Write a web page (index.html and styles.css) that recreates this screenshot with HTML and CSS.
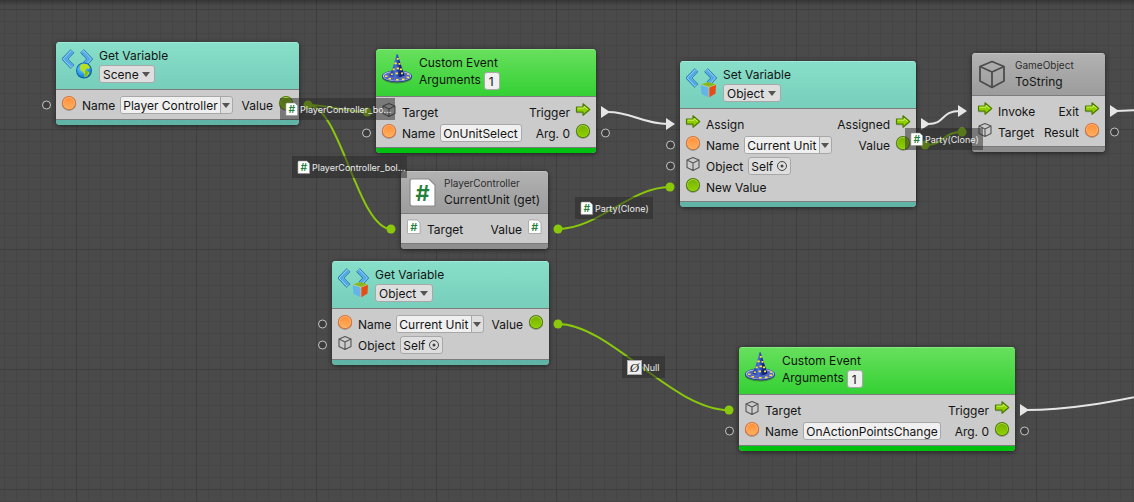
FILE: index.html
```html
<!DOCTYPE html>
<html lang="en">
<head>
<meta charset="utf-8">
<title>Script Graph</title>
<link rel="stylesheet" href="styles.css">
</head>
<body>
<svg class="defs" aria-hidden="true">
  <defs>
    <linearGradient id="gOrange" x1="0" y1="0" x2="0" y2="1"><stop offset="0" stop-color="#ff8f3c"/><stop offset="1" stop-color="#ffb05c"/></linearGradient>
    <linearGradient id="gGreen" x1="0" y1="0" x2="0" y2="1"><stop offset="0" stop-color="#78b400"/><stop offset="1" stop-color="#8fd000"/></linearGradient>
    <linearGradient id="gHat" x1="0" y1="0" x2="1" y2="0"><stop offset="0" stop-color="#142a86"/><stop offset=".4" stop-color="#4a70d8"/><stop offset=".7" stop-color="#12257c"/><stop offset="1" stop-color="#0c1c60"/></linearGradient>
    <radialGradient id="gGlobe" cx=".4" cy=".35" r=".7"><stop offset="0" stop-color="#7fd8ff"/><stop offset=".6" stop-color="#2c9be8"/><stop offset="1" stop-color="#0f6cc0"/></radialGradient>
    <symbol id="orange" viewBox="0 0 16 16"><circle cx="8" cy="8.7" r="7.2" fill="#777" opacity=".6"/><circle cx="8" cy="8" r="7" fill="#e0702c"/><circle cx="8" cy="8" r="6" fill="#ffc08c"/><circle cx="8" cy="8.3" r="5.5" fill="url(#gOrange)"/></symbol>
    <symbol id="green" viewBox="0 0 16 16"><circle cx="8" cy="8.7" r="7.2" fill="#777" opacity=".6"/><circle cx="8" cy="8" r="7" fill="#4b7d00"/><circle cx="8" cy="8" r="6" fill="#b4dc50"/><circle cx="8" cy="8.3" r="5.5" fill="url(#gGreen)"/></symbol>
    <symbol id="flow" viewBox="0 0 16 16"><path d="M1.500 6.200H8V3L14.500 8.500L8 14V11.200H1.500Z" fill="#555" opacity=".4"/><path d="M1.500 5H8V1.800L14.700 7.500L8 13.200V10H1.500Z" fill="#8fce00" stroke="#4b7d00" stroke-width="1.200" stroke-linejoin="round"/><path d="M2.600 6.200H9.100V4.400L12.800 7.500" fill="none" stroke="#cdf060" stroke-width="1"/></symbol>
    <symbol id="box" viewBox="0 0 16 16"><path d="M8 1.500L14 4V11.500L8 14.500L2 11.500V4ZM2 4L8 7L14 4M8 7V14.500" fill="none" stroke="#555" stroke-width="1.100" stroke-linejoin="round"/></symbol>
    <symbol id="boxLarge" viewBox="0 0 32 32"><path d="M14 3.500L26 8.500V23L14 29.500L2 23V8.500ZM2 8.500L14 14L26 8.500M14 14V29.500" fill="none" stroke="#4c4c4c" stroke-width="1.800" stroke-linejoin="round"/></symbol>
    <symbol id="script" viewBox="0 0 14 16"><path d="M1.500 1H10L13 4V14.500H1.500Q.5 14.500 .5 13.500V2Q.5 1 1.500 1Z" fill="#fff" stroke="#8a8a8a" stroke-width=".6"/><text x="6.800" y="11.800" text-anchor="middle" class="hash">#</text></symbol>
    <symbol id="angles" viewBox="0 0 32 32">
      <path d="M10.500 2L2.800 10L10.500 18M20 2L27.700 10L22.500 15.500" fill="none" stroke="#1f6cae" stroke-width="5"/>
      <path d="M10.200 2.300L2.800 10L10.200 17.700M20.300 2.300L27.700 10L22.500 15.500" fill="none" stroke="#9bd8fa" stroke-width="3.400"/>
      <path d="M10.200 2.800L3.200 10L10.200 17.200M20.300 2.800L27.300 10L22.500 15" fill="none" stroke="#4ea9e6" stroke-width="2.400"/>
    </symbol>
    <symbol id="varScene" viewBox="0 0 32 32"><use href="#angles"/>
      <circle cx="22" cy="21.500" r="8" fill="#0d5ca8"/><circle cx="22" cy="21.500" r="7.200" fill="url(#gGlobe)"/>
      <path d="M20 14.800L25 15L28 18L27 20L24.500 19.500L23 21.500L26 22.500L27.500 24L25 27.500L22.500 28.200L22.500 25L20.500 22.500L18.500 21L18 17Z" fill="#b8e020"/><path d="M23 21.500L26.500 22.500L25 27L23 28V24Z" fill="#7cc01c"/>
    </symbol>
    <symbol id="varObject" viewBox="0 0 32 32"><use href="#angles"/>
      <path d="M14.500 16.500L22.500 14L30 16.500L23 19.500Z" fill="#8ab81c"/><path d="M14.500 16.500L23 19.200V29.500L15.500 26Z" fill="#64b4e8"/><path d="M30 16.500L23 19.200V29.500L29.500 25.500Z" fill="#e64c14"/><path d="M14.500 16.500L23 19.200L30 16.500M23 19.200V29.500" fill="none" stroke="#d8e8b0" stroke-width=".5"/>
    </symbol>
    <symbol id="hat" viewBox="0 0 32 32">
      <ellipse cx="15" cy="23.500" rx="15" ry="6" fill="#333" opacity=".45"/><ellipse cx="15" cy="22.300" rx="15" ry="6" fill="#26388f"/><ellipse cx="15" cy="22" rx="14.200" ry="5.300" fill="#b4c0ee"/><ellipse cx="15" cy="22.300" rx="13" ry="4.500" fill="#5468c0"/>
      <path d="M15 0Q16 0 16.500 3L20 14L22.500 21.500Q15 25.500 7.500 21.500L11 13L13.800 3Q14.200 0 15 0Z" fill="url(#gHat)"/>
      <path d="M14.800 4h2v1.700h-2zM12.300 8.500h2.500v1.700h-2.500zM16.500 9h2v1.700h-2zM14.500 13.500h2.500v1.700h-2.500zM10.500 14.500h2.200v1.700h-2.200zM17.800 14.500h2.200v1.700h-2.200zM13.500 18.500h2.500v1.700h-2.500zM19 18.500h2v1.700h-2zM8.800 19.500h2v1.500h-2zM3 21.500h2.500v1.500h-2.500zM6.500 24h2.500v1.500h-2.500zM14 25h2.500v1.500h-2.500zM20 24.500h2.500v1.500h-2.500zM24.500 22.500h2.500v1.500h-2.500zM25 19.500h2v1.300h-2z" fill="#ffe43c"/>
    </symbol>
    <symbol id="target" viewBox="0 0 12 12"><circle cx="6" cy="6" r="4.500" fill="none" stroke="#444" stroke-width="1"/><circle cx="6" cy="6" r="1.500" fill="#444"/></symbol>
  </defs>
</svg>

<main class="graph">
  <svg class="wires" aria-hidden="true">
    <g class="wire value">
      <path d="M308 105C330 105 345 112 367 112"/>
      <path d="M308 105C340 105 358 229 391 229"/>
      <path d="M558 229C598 229 630 187 670 187"/>
      <path d="M558 324C610 324 672 410 729 410"/>
      <path d="M925 145C945 145 942 132 962 132"/>
    </g>
    <g class="wire control">
      <path d="M608 112C632 112 642 124 668 124"/>
      <path d="M928 124C946 124 940 111 960 111"/>
      <path d="M1116 111L1160 109"/>
      <path d="M1026 410C1070 410 1110 402 1150 394"/>
    </g>
    <g class="dot">
      <circle cx="308" cy="105" r="4.500"/><circle cx="367" cy="112" r="4.500"/><circle cx="391" cy="229" r="4.500"/><circle cx="558" cy="229" r="4.500"/><circle cx="670" cy="187" r="4.500"/><circle cx="558" cy="324" r="4.500"/><circle cx="729" cy="410" r="4.500"/><circle cx="925" cy="145" r="4.500"/><circle cx="962" cy="132" r="4.500"/>
    </g>
    <g class="ring">
      <circle cx="46.500" cy="105" r="4"/><circle cx="366.500" cy="133" r="4"/><circle cx="605.500" cy="133" r="4"/><circle cx="670.500" cy="145" r="4"/><circle cx="670.500" cy="166" r="4"/><circle cx="1114.500" cy="132" r="4"/><circle cx="322.500" cy="324" r="4"/><circle cx="322.500" cy="345" r="4"/><circle cx="729.500" cy="431" r="4"/><circle cx="1024.500" cy="431" r="4"/>
    </g>
    <path class="tip" d="M601 106L610 112L601 118ZM666 118L675 124L666 130ZM921 118L930 124L921 130ZM958 105L967 111L958 117ZM1110 105L1119 111L1110 117ZM1020 404L1029 410L1020 416Z"/>
  </svg>

  <section class="node teal get-scene">
    <header class="head"><svg class="unit-icon low"><use href="#varScene"/></svg>
      <div class="titles"><h2 class="title">Get Variable</h2>
        <span class="drop"><select aria-label="Variable kind"><option>Scene</option></select></span></div></header>
    <div class="body">
      <div class="row"><div class="port"><svg class="icon"><use href="#orange"/></svg><label for="n1">Name</label><span class="combo"><input id="n1" class="w-long" value="Player Controller"><button aria-label="Choose variable"></button></span></div><div class="port"><span>Value</span><svg class="icon"><use href="#green"/></svg></div></div>
    </div><div class="foot"></div>
  </section>

  <section class="node lime event-select">
    <header class="head"><svg class="unit-icon"><use href="#hat"/></svg>
      <div class="titles"><h2 class="title">Custom Event</h2>
        <div class="args"><label for="a1">Arguments</label><input id="a1" class="field count" value="1"></div></div></header>
    <div class="body">
      <div class="row"><div class="port"><svg class="icon"><use href="#box"/></svg><span>Target</span></div><div class="port"><span>Trigger</span><svg class="icon"><use href="#flow"/></svg></div></div>
      <div class="row"><div class="port"><svg class="icon"><use href="#orange"/></svg><label for="n2">Name</label><input id="n2" class="field w-medium" value="OnUnitSelect"></div><div class="port"><span>Arg. 0</span><svg class="icon"><use href="#green"/></svg></div></div>
    </div><div class="foot"></div>
  </section>

  <section class="node gray current-unit">
    <header class="head"><svg class="unit-icon page"><use href="#script"/></svg>
      <div class="titles"><p class="owner">PlayerController</p><h2 class="title">CurrentUnit (get)</h2></div></header>
    <div class="body">
      <div class="row"><div class="port"><svg class="icon"><use href="#script"/></svg><span>Target</span></div><div class="port"><span>Value</span><svg class="icon"><use href="#script"/></svg></div></div>
    </div><div class="foot"></div>
  </section>

  <section class="node teal set-object">
    <header class="head"><svg class="unit-icon low"><use href="#varObject"/></svg>
      <div class="titles"><h2 class="title">Set Variable</h2>
        <span class="drop"><select aria-label="Variable kind"><option>Object</option></select></span></div></header>
    <div class="body">
      <div class="row"><div class="port"><svg class="icon"><use href="#flow"/></svg><span>Assign</span></div><div class="port"><span>Assigned</span><svg class="icon"><use href="#flow"/></svg></div></div>
      <div class="row"><div class="port"><svg class="icon"><use href="#orange"/></svg><label for="n3">Name</label><span class="combo"><input id="n3" class="w-short" value="Current Unit"><button aria-label="Choose variable"></button></span></div><div class="port"><span>Value</span><svg class="icon"><use href="#green"/></svg></div></div>
      <div class="row"><div class="port"><svg class="icon"><use href="#box"/></svg><span>Object</span><button class="object">Self<svg><use href="#target"/></svg></button></div></div>
      <div class="row"><div class="port"><svg class="icon"><use href="#green"/></svg><span>New Value</span></div></div>
    </div><div class="foot"></div>
  </section>

  <section class="node gray to-string">
    <header class="head"><svg class="unit-icon"><use href="#boxLarge"/></svg>
      <div class="titles"><p class="owner">GameObject</p><h2 class="title">ToString</h2></div></header>
    <div class="body">
      <div class="row"><div class="port"><svg class="icon"><use href="#flow"/></svg><span>Invoke</span></div><div class="port"><span>Exit</span><svg class="icon"><use href="#flow"/></svg></div></div>
      <div class="row"><div class="port"><svg class="icon"><use href="#box"/></svg><span>Target</span></div><div class="port"><span>Result</span><svg class="icon"><use href="#orange"/></svg></div></div>
    </div><div class="foot"></div>
  </section>

  <section class="node teal get-object">
    <header class="head"><svg class="unit-icon low"><use href="#varObject"/></svg>
      <div class="titles"><h2 class="title">Get Variable</h2>
        <span class="drop"><select aria-label="Variable kind"><option>Object</option></select></span></div></header>
    <div class="body">
      <div class="row"><div class="port"><svg class="icon"><use href="#orange"/></svg><label for="n4">Name</label><span class="combo"><input id="n4" class="w-short" value="Current Unit"><button aria-label="Choose variable"></button></span></div><div class="port"><span>Value</span><svg class="icon"><use href="#green"/></svg></div></div>
      <div class="row"><div class="port"><svg class="icon"><use href="#box"/></svg><span>Object</span><button class="object">Self<svg><use href="#target"/></svg></button></div></div>
    </div><div class="foot"></div>
  </section>

  <section class="node lime event-points">
    <header class="head"><svg class="unit-icon"><use href="#hat"/></svg>
      <div class="titles"><h2 class="title">Custom Event</h2>
        <div class="args"><label for="a2">Arguments</label><input id="a2" class="field count" value="1"></div></div></header>
    <div class="body">
      <div class="row"><div class="port"><svg class="icon"><use href="#box"/></svg><span>Target</span></div><div class="port"><span>Trigger</span><svg class="icon"><use href="#flow"/></svg></div></div>
      <div class="row"><div class="port"><svg class="icon"><use href="#orange"/></svg><label for="n5">Name</label><input id="n5" class="field w-wide" value="OnActionPointsChange"></div><div class="port"><span>Arg. 0</span><svg class="icon"><use href="#green"/></svg></div></div>
    </div><div class="foot"></div>
  </section>

  <div class="tag tag-bo"><svg><use href="#script"/></svg>PlayerController_bo...</div>
  <div class="tag tag-bol"><svg><use href="#script"/></svg>PlayerController_bol...</div>
  <div class="tag tag-party"><svg><use href="#script"/></svg>Party(Clone)</div>
  <div class="tag tag-party-out"><svg><use href="#script"/></svg>Party(Clone)</div>
  <div class="tag tag-null"><span class="null-icon">Ø</span>Null</div>
</main>
</body>
</html>
```
FILE: styles.css
```css
* { box-sizing: border-box; }

body {
  margin: 0;
  font: 12px/17px Inter, sans-serif;
  color: #141414;
}

.defs { position: absolute; width: 0; height: 0; }

.graph {
  position: relative;
  min-height: 100vh;
  overflow: hidden;
  background-color: #4a4a4a;
  background-image:
    linear-gradient(rgba(0, 0, 0, .28), transparent 6px),
    linear-gradient(90deg, #3e3e3e 1px, transparent 1px),
    linear-gradient(#3e3e3e 1px, transparent 1px),
    linear-gradient(90deg, #454545 1px, transparent 1px),
    linear-gradient(#454545 1px, transparent 1px);
  background-size: auto, 120px 120px, 120px 120px, 12px 12px, 12px 12px;
  background-position: 0 0, 76px 0, 0 9px, 4px 0, 0 9px;
  background-repeat: no-repeat, repeat, repeat, repeat, repeat;
}

.wires { position: absolute; inset: 0; width: 100%; height: 100%; }
.wire { fill: none; stroke-width: 2; }
.value { stroke: #8ac80c; }
.control { stroke: #e6e6e6; }
.dot { fill: #8ac80c; }
.ring { fill: #3c3c3c; stroke: #c4c4c4; stroke-width: 1; }
.tip { fill: #e6e6e6; }
.hash { font: 600 11px Inter, sans-serif; fill: #24803a; }

/* Nodes */
.node {
  position: absolute;
  border-radius: 4px;
  overflow: hidden;
  background: #cbcbcb;
  box-shadow: 0 1px 5px rgba(0, 0, 0, .55);
}
.get-scene { left: 56px; top: 42px; width: 243px; }
.event-select { left: 376px; top: 49px; width: 220px; }
.current-unit { left: 401px; top: 171px; width: 147px; }
.set-object { left: 680px; top: 61px; width: 236px; }
.to-string { left: 972px; top: 53px; width: 133px; }
.get-object { left: 332px; top: 261px; width: 217px; }
.event-points { left: 739px; top: 347px; width: 276px; }

.head {
  display: flex;
  gap: 5px;
  min-height: 48px;
  padding: 5px 6px 0;
  border-bottom: 1px solid #7c7c7c;
}
.teal .head { background: linear-gradient(#88dfc9, #76cebb); box-shadow: inset 0 1px #9deadb; }
.lime .head { background: linear-gradient(#68e05e, #34d034); box-shadow: inset 0 1px #85ea7c; }
.gray .head { min-height: 43px; background: linear-gradient(#b2b2b2, #9c9c9c); box-shadow: inset 0 1px #c2c2c2; }

.unit-icon { flex: none; width: 32px; height: 32px; }
.low { margin-top: 2px; }
.page { margin-top: 1px; }

.titles { display: flex; flex-direction: column; align-items: flex-start; }
.title, .owner { margin: 0; font-weight: 400; white-space: nowrap; }
.title { font-size: 12px; }
.owner { font-size: 10px; line-height: 15px; color: #2c2c2c; }

.args { display: flex; align-items: flex-start; gap: 3px; }

.body { padding: 5px 5px 3px; }
.row { display: flex; justify-content: space-between; height: 21px; }
.port { display: flex; align-items: flex-start; gap: 5px; white-space: nowrap; }
.port > span:not(.combo), .port > label { padding-top: 2px; }
.icon { width: 16px; height: 16px; }

.foot { height: 6px; border-top: 1px solid #7c7c7c; }
.teal .foot { background: #60b4a6; }
.lime .foot { background: #00c010; }
.gray .foot { background: #8e8e8e; }

/* Controls */
input, select, button { margin: 0; font: inherit; color: inherit; }
.field, .combo, .object, select {
  height: 18px;
  border: 1px solid #a8a8a8;
  border-radius: 3px;
}
.field { padding: 0 2px; background: #f0f0f0; }
.port > .field, .combo, .object { margin-top: 1px; }
.args .count { width: 16px; padding: 0 4px; margin-top: 1px; }
.w-medium { width: 82px; }
.w-wide { width: 138px; }

.drop { position: relative; }
.drop::after {
  content: "";
  position: absolute;
  right: 5px;
  top: 7px;
  border: 4px solid transparent;
  border-top: 5px solid #555;
  border-bottom: 0;
}
.drop { margin-top: 1px; }
select {
  display: block;
  appearance: none;
  padding: 0 15px 0 3px;
  background: #dedede;
}

.combo { display: flex; background: #dedede; overflow: hidden; }
.combo input { border: 0; padding: 0 2px; background: #f0f0f0; }
.w-long { width: 99px; }
.w-short { width: 74px; }
.combo button {
  display: flex;
  align-items: center;
  width: 12px;
  padding: 0 0 0 1px;
  border: 0;
  border-left: 1px solid #a8a8a8;
  background: none;
}
.combo button::before {
  content: "";
  border: 4px solid transparent;
  border-top: 5px solid #555;
  border-bottom: 0;
}

.object {
  display: flex;
  align-items: center;
  gap: 3px;
  padding: 0 2px;
  background: #dedede;
}
.object svg { width: 12px; height: 12px; }

/* Predicted value tags */
.tag {
  position: absolute;
  display: flex;
  align-items: center;
  gap: 1px;
  height: 22px;
  padding: 0 5px;
  background: rgba(40, 40, 40, .5);
  color: #ececec;
  font-size: 9px;
  white-space: nowrap;
}
.tag svg { flex: none; width: 14px; height: 15px; }
.tag-bo { left: 280px; top: 98px; width: 115px; }
.tag-bol { left: 292px; top: 156px; width: 115px; }
.tag-party { left: 575px; top: 197px; width: 78px; }
.tag-party-out { left: 905px; top: 128px; width: 78px; }
.tag-null { left: 622px; top: 356px; width: 43px; }
.null-icon {
  width: 15px;
  height: 15px;
  border: 1px solid #aaa;
  background: #f0f0f0;
  color: #222;
  font: italic 13px/13px "Liberation Serif", serif;
  text-align: center;
}
```
